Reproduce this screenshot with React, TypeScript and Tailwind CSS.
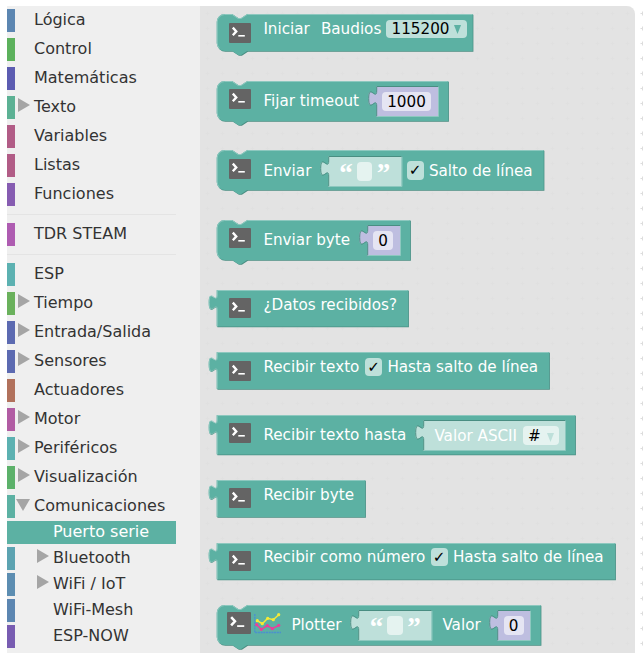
import type { ReactNode } from "react";
import clsx from "clsx";

type Category = {
  name: string;
  color: string;
  arrow?: "closed" | "open";
  selected?: boolean;
};

const basics: Category[] = [
  { name: "Lógica", color: "bg-[#5c86b1]" },
  { name: "Control", color: "bg-[#5cb15c]" },
  { name: "Matemáticas", color: "bg-[#5c5cb1]" },
  { name: "Texto", color: "bg-[#5cb194]", arrow: "closed" },
  { name: "Variables", color: "bg-[#b15c86]" },
  { name: "Listas", color: "bg-[#b15c86]" },
  { name: "Funciones", color: "bg-[#865cb1]" },
];

const boards: Category[] = [{ name: "TDR STEAM", color: "bg-[#ae5cb1]" }];

const devices: Category[] = [
  { name: "ESP", color: "bg-[#5cb1b1]" },
  { name: "Tiempo", color: "bg-[#6ab15c]", arrow: "closed" },
  { name: "Entrada/Salida", color: "bg-[#5c6ab1]", arrow: "closed" },
  { name: "Sensores", color: "bg-[#5c6ab1]", arrow: "closed" },
  { name: "Actuadores", color: "bg-[#b1715c]" },
  { name: "Motor", color: "bg-[#b15ca3]", arrow: "closed" },
  { name: "Periféricos", color: "bg-[#5cb1b1]", arrow: "closed" },
  { name: "Visualización", color: "bg-[#5cb16a]", arrow: "closed" },
  { name: "Comunicaciones", color: "bg-[#5cb1a3]", arrow: "open" },
];

const communications: Category[] = [
  { name: "Puerto serie", color: "bg-[#5cb1a3]", selected: true },
  { name: "Bluetooth", color: "bg-[#5ca3b1]", arrow: "closed" },
  { name: "WiFi / IoT", color: "bg-[#5c8db1]", arrow: "closed" },
  { name: "WiFi-Mesh", color: "bg-[#5c86b1]" },
  { name: "ESP-NOW", color: "bg-[#785cb1]" },
];

function CategoryRow({ item, nested }: { item: Category; nested?: boolean }) {
  return (
    <li
      className={clsx(
        "flex h-[23px] w-[169px]",
        item.selected ? "bg-[#5cb1a3] text-white" : "text-[#333]",
      )}
    >
      <span className={clsx("h-full w-2 shrink-0", item.color)} />
      <span className={clsx("flex shrink-0", nested ? "w-[38px] pl-[22px]" : "w-[19px]", !nested && (item.arrow === "open" ? "pl-[1px]" : "pl-[3px]"))}>
        {item.arrow === "closed" && (
          <svg className="mt-[2px] h-[14px] w-[12px]" viewBox="0 0 12 14">
            <path d="M0 0 12 7 0 14z" fill="#a5a5a5" />
          </svg>
        )}
        {item.arrow === "open" && (
          <svg className="mt-[4px] h-[12px] w-[14px]" viewBox="0 0 14 12">
            <path d="M0 0H14L7 12z" fill="#a5a5a5" />
          </svg>
        )}
      </span>
      <span className="whitespace-nowrap text-[16px] leading-[22px]">{item.name}</span>
    </li>
  );
}

/* Body outline of a block; statements carry a notch, outputs a puzzle tab. */
function BlockShape({ w, h, output }: { w: number; h: number; output?: boolean }) {
  const tab = "V20c0,-10 -8,8 -8,-7.5s8,2.5 8,-7.5";
  const body = output
    ? `M0 0H${w}V${h}H0${tab}z`
    : `M0 8A8 8 0 0 1 8 0H15.5l6 4h3l6-4H${w}V${h}H30.5l-6 4h-3l-6-4H8A8 8 0 0 1 0 ${h - 8}z`;
  const light = output
    ? `M.5 ${h - 0.5}${tab}V.5H${w - 0.5}`
    : `M2.7 ${h - 2.7}A7.5 7.5 0 0 1 .5 ${h - 8}V8A7.5 7.5 0 0 1 8 .5H15.5l6 4h3l6-4H${w - 0.5}`;
  return (
    <svg className="absolute left-0 top-0 overflow-visible" width={w} height={h}>
      <g transform="translate(-.3 0)">
        <path d={body} fill="#498e82" transform="translate(.7 .8)" />
        <path d={body} fill="#5cb1a3" />
        <path d={light} fill="none" stroke="#8dc8bf" />
      </g>
    </svg>
  );
}

function Block({ place, w, h, output, children }: { place: string; w: number; h: number; output?: boolean; children: ReactNode }) {
  return (
    <div className={clsx("absolute flex items-start", place)}>
      <BlockShape w={w} h={h} output={output} />
      <div className="relative flex items-start">{children}</div>
    </div>
  );
}

function Label({ className, children }: { className?: string; children: ReactNode }) {
  return (
    <span className={clsx("shrink-0 whitespace-nowrap pl-[0.9px] text-[15.2px] leading-[20px] text-white", className)}>{children}</span>
  );
}

function Terminal({ className }: { className: string }) {
  return (
    <svg className={clsx("shrink-0", className)} viewBox="0 0 22 20" preserveAspectRatio="none">
      <rect width="22" height="20" rx="1" fill="#646464" />
      <path d="M3.8 4.6 7.3 8.4 3.8 12.2" fill="none" stroke="#fff" strokeWidth="2.3" />
      <path d="M9.3 12.8H15.8" stroke="#fff" strokeWidth="1.6" />
    </svg>
  );
}

function PlotIcon() {
  return (
    <svg className="ml-[3px] mt-[8px] h-[21px] w-[28px] shrink-0" viewBox="0 0 28 21">
      <path d="M.8 1V19.5H27" fill="none" stroke="#4b8fd0" strokeWidth="1.3" strokeDasharray="2 .7" />
      <path d="M3.3 7.7 8.3 10.7 13.7 5.3 19.3 6.7 24.7 1.7" fill="none" stroke="#f6ea35" strokeWidth="1.5" />
      <path d="M2.7 11.7 7.3 16.3 13.3 12.7 18.3 15.7 24.7 12.3" fill="none" stroke="#ee3d9c" strokeWidth="1.5" />
      <g fill="#f6ea35">
        <circle cx="3.3" cy="7.7" r="1.6" />
        <circle cx="8.3" cy="10.7" r="1.6" />
        <circle cx="13.7" cy="5.3" r="1.6" />
        <circle cx="19.3" cy="6.7" r="1.6" />
        <circle cx="24.7" cy="1.7" r="1.6" />
      </g>
      <g fill="#ee3d9c">
        <circle cx="2.7" cy="11.7" r="1.6" />
        <circle cx="7.3" cy="16.3" r="1.6" />
        <circle cx="13.3" cy="12.7" r="1.6" />
        <circle cx="18.3" cy="15.7" r="1.6" />
        <circle cx="24.7" cy="12.3" r="1.6" />
      </g>
    </svg>
  );
}

function Field({ className, children }: { className: string; children?: ReactNode }) {
  return (
    <span
      className={clsx(
        "flex h-[18.5px] shrink-0 items-center justify-center whitespace-nowrap rounded-[4px] bg-white/60 text-[15.2px] leading-[18px] text-black",
        className,
      )}
    >
      {children}
    </span>
  );
}

function Check({ className }: { className: string }) {
  return <Field className={clsx("w-[17px]", className)}>✓</Field>;
}

function DropArrow({ fill }: { fill: string }) {
  return (
    <svg className="mt-[2px] h-[9px] w-[7px]" viewBox="0 0 7 9">
      <path d="M0 0H7L3.5 9z" fill={fill} />
    </svg>
  );
}

/* Value socket holding a shadow block. */
function Socket({ w, fill, className, children }: { w: number; fill: string; className: string; children: ReactNode }) {
  const tab = "V20c0,-10 -8,8 -8,-7.5s8,2.5 8,-7.5";
  return (
    <span className={clsx("relative flex h-[31px] shrink-0 items-start", className)}>
      <svg className="absolute left-0 top-0 overflow-visible" width={w} height={31}>
        <g transform="translate(-.8 0)">
          <path d={`M0 0H${w}V31H0${tab}z`} fill={fill} />
          <path d={`M.5 30.5${tab}V.5H${w}`} fill="none" stroke="#498e82" />
          <path d={`M1 30.5H${w + 0.3}V1`} fill="none" stroke="#8dc8bf" />
        </g>
      </svg>
      <span className="relative flex items-start">{children}</span>
    </span>
  );
}

function NumberShadow({ w, field, className, children }: { w: number; field: string; className: string; children: ReactNode }) {
  return (
    <Socket w={w} fill="#bebee0" className={className}>
      <Field className={clsx("ml-[5.5px] mt-[6px] pt-[1.5px]", field)}>{children}</Field>
    </Socket>
  );
}

function TextShadow({ className }: { className: string }) {
  const quote = "w-[17px] shrink-0 text-center font-['Liberation_Serif',serif] text-[27px] font-bold leading-[30px] text-white";
  return (
    <Socket w={73.5} fill="#bee0da" className={clsx("w-[73.5px]", className)}>
      <span className={clsx(quote, "ml-[9px] mt-[2px]")}>“</span>
      <Field className="ml-[2px] mt-[6px] w-[15.5px]" />
      <span className={clsx(quote, "ml-[3px] mt-[2px]")}>”</span>
    </Socket>
  );
}

export default function App() {
  return (
    <div className="relative flex h-[653px] w-[643px] overflow-hidden bg-white pl-[7px] pt-[6px] font-['DejaVu_Sans',sans-serif]">
      <svg className="absolute left-0 top-0" width="643" height="653">
        <defs>
          <pattern id="grid" width="15" height="15" x="5" y="6" patternUnits="userSpaceOnUse">
            <path d="M5.5 7.5H9.5M7.5 5.5V9.5" stroke="#ddd" />
          </pattern>
        </defs>
        <rect x="200" y="6" width="443" height="647" fill="url(#grid)" />
      </svg>

      <nav className="relative w-[193px] shrink-0 bg-[#efefef] pt-[3px]">
        <ul className="flex flex-col gap-[6px]">
          {basics.map((c) => <CategoryRow key={c.name} item={c} />)}
        </ul>
        <hr className="mb-[8px] mt-[8px] w-[169px] border-[#e4e4e4]" />
        <ul>
          {boards.map((c) => <CategoryRow key={c.name} item={c} />)}
        </ul>
        <hr className="mb-[8px] mt-[8px] w-[169px] border-[#e4e4e4]" />
        <ul className="flex flex-col gap-[6px]">
          {devices.map((c) => <CategoryRow key={c.name} item={c} />)}
        </ul>
        <ul className="mt-[3px] flex flex-col gap-[3px]">
          {communications.map((c) => <CategoryRow key={c.name} item={c} nested />)}
        </ul>
      </nav>

      <main className="relative w-[435px] shrink-0 rounded-tr-[8px] bg-[#e0e0e0]/90">
        <Block place="left-[17px] top-[8px]" w={256} h={37}>
          <Terminal className="ml-[12px] mt-[9px] h-[20px] w-[22px]" />
          <Label className="ml-[11.5px] mt-[5px] w-[57.5px]">Iniciar</Label>
          <Label className="mt-[5px] w-[66px]">Baudios</Label>
          <Field className="mt-[5.5px] w-[81px] gap-[5px]">
            115200
            <DropArrow fill="#5cb1a3" />
          </Field>
        </Block>

        <Block place="left-[17px] top-[75px]" w={231.5} h={40}>
          <Terminal className="ml-[12px] mt-[8px] h-[20px] w-[22px]" />
          <Label className="ml-[11.5px] mt-[10px] w-[114px]">Fijar timeout</Label>
          <NumberShadow w={62} field="w-[49px]" className="mt-[5px] w-[62px]">1000</NumberShadow>
        </Block>

        <Block place="left-[17px] top-[144px]" w={327} h={40}>
          <Terminal className="ml-[12px] mt-[9px] h-[20px] w-[22px]" />
          <Label className="ml-[11.5px] mt-[11px] w-[66px]">Enviar</Label>
          <TextShadow className="mt-[6px]" />
          <Check className="ml-[4.5px] mt-[11px]" />
          <Label className="ml-[4.5px] mt-[11px]">Salto de línea</Label>
        </Block>

        <Block place="left-[17px] top-[214px]" w={193.5} h={40}>
          <Terminal className="ml-[12px] mt-[8px] h-[20px] w-[22px]" />
          <Label className="ml-[11.5px] mt-[10px] w-[105px]">Enviar byte</Label>
          <NumberShadow w={33} field="w-[20px]" className="mt-[5px] w-[33px]">0</NumberShadow>
        </Block>

        <Block place="left-[17px] top-[284px]" w={191.5} h={36.5} output>
          <Terminal className="ml-[12px] mt-[8px] h-[20px] w-[22px]" />
          <Label className="ml-[11.5px] mt-[5px]">¿Datos recibidos?</Label>
        </Block>

        <Block place="left-[17px] top-[346px]" w={332.5} h={37} output>
          <Terminal className="ml-[12px] mt-[9px] h-[20px] w-[22px]" />
          <Label className="ml-[11.5px] mt-[5px] w-[102.5px]">Recibir texto</Label>
          <Check className="mt-[5.5px]" />
          <Label className="ml-[4.5px] mt-[5px]">Hasta salto de línea</Label>
        </Block>

        <Block place="left-[17px] top-[409px]" w={358.5} h={39.5} output>
          <Terminal className="ml-[12px] mt-[8px] h-[20px] w-[22px]" />
          <Label className="ml-[11.5px] mt-[10px] w-[161px]">Recibir texto hasta</Label>
          <Socket w={142} fill="#bee0da" className="mt-[5px] w-[142px]">
            <Label className="ml-[10px] mt-[5.5px] w-[89.5px]">Valor ASCII</Label>
            <Field className="mt-[6px] w-[35.5px] gap-[6px] pt-[1.5px]">
              #
              <DropArrow fill="#bee0da" />
            </Field>
          </Socket>
        </Block>

        <Block place="left-[17px] top-[474px]" w={148.5} h={37} output>
          <Terminal className="ml-[12px] mt-[8px] h-[20px] w-[22px]" />
          <Label className="ml-[11.5px] mt-[5px]">Recibir byte</Label>
        </Block>

        <Block place="left-[17px] top-[537px]" w={398.5} h={36.5} output>
          <Terminal className="ml-[12px] mt-[8px] h-[20px] w-[22px]" />
          <Label className="ml-[11.5px] mt-[4px] w-[168px]">Recibir como número</Label>
          <Check className="mt-[4.5px]" />
          <Label className="ml-[4.5px] mt-[4px]">Hasta salto de línea</Label>
        </Block>

        <Block place="left-[17px] top-[599px]" w={324} h={40}>
          <Terminal className="ml-[10px] mt-[7px] h-[22px] w-[24px]" />
          <PlotIcon />
          <Label className="ml-[8.5px] mt-[10px] w-[68.5px]">Plotter</Label>
          <TextShadow className="mt-[5px]" />
          <Label className="ml-[9px] mt-[10px] w-[56.5px]">Valor</Label>
          <NumberShadow w={33} field="w-[20px]" className="mt-[5px] w-[33px]">0</NumberShadow>
        </Block>
      </main>
    </div>
  );
}
